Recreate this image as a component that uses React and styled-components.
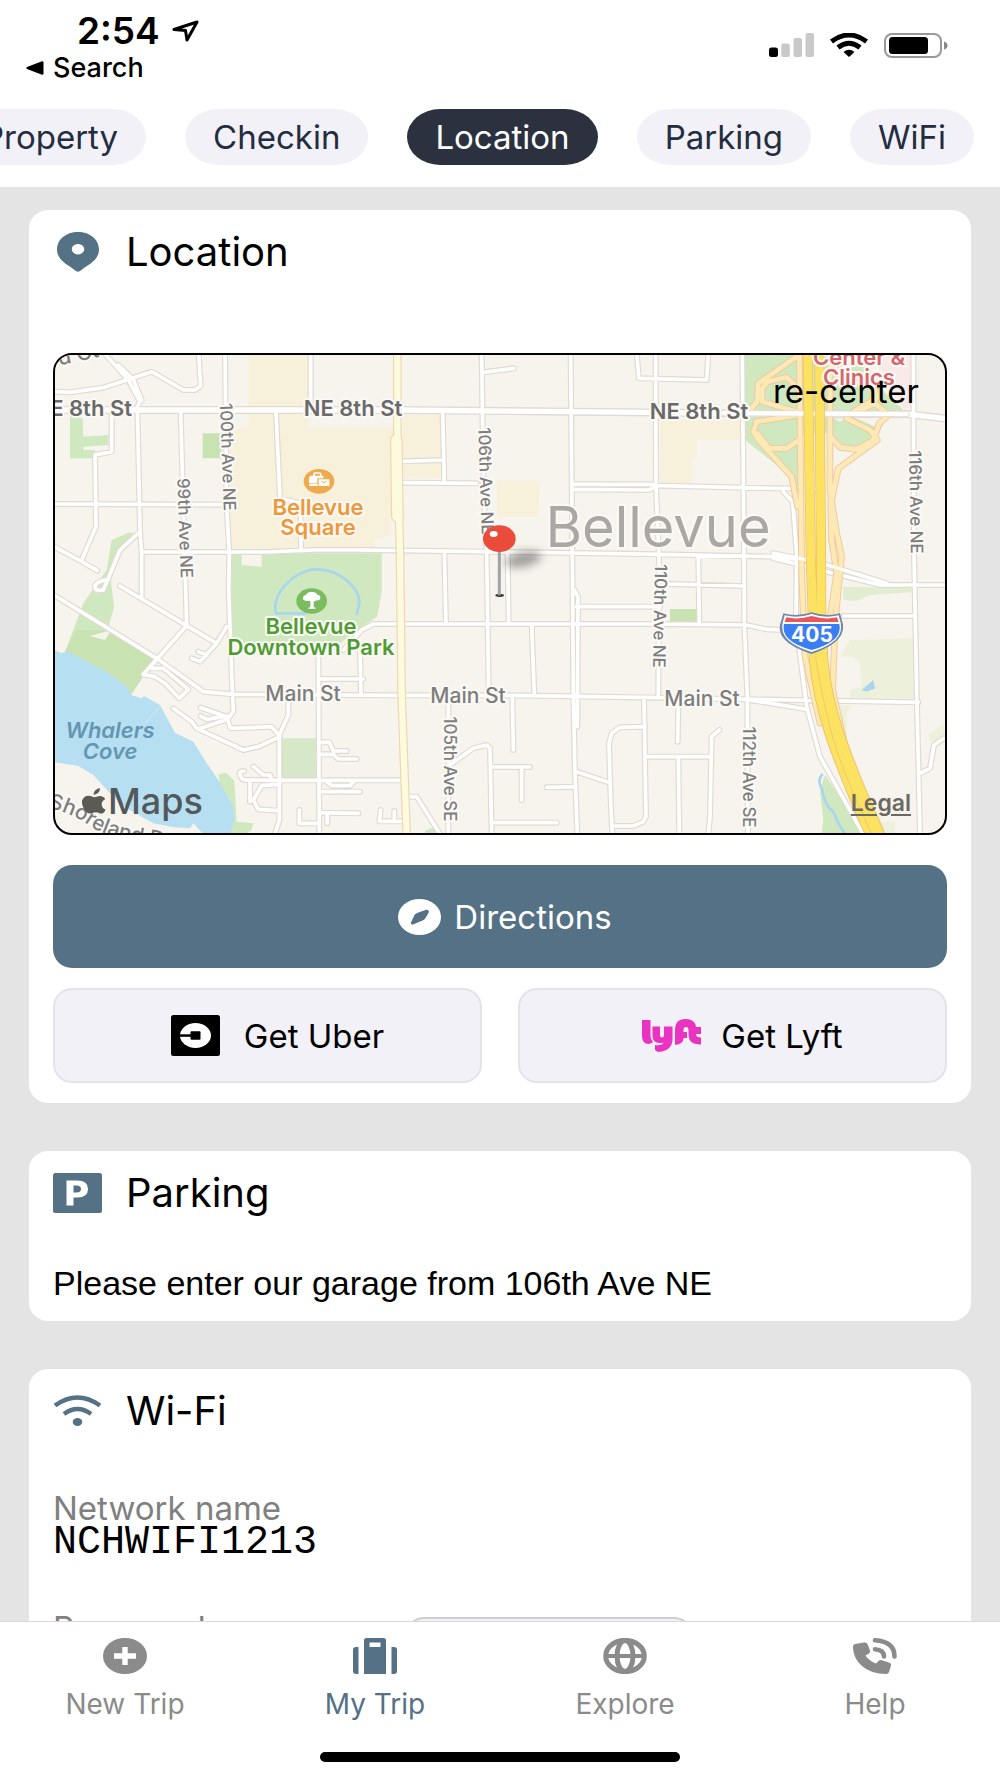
import React from "react";
import styled, { createGlobalStyle } from "styled-components";

const slate = "#547186";
const ink = "#232d3f";
const grey = "#8b8b8b";

const GlobalStyle = createGlobalStyle`
  * { box-sizing: border-box; }
  body {
    margin: 0;
    background: #e4e4e4;
    font-family: Inter, "Liberation Sans", sans-serif;
    color: #000;
  }
  button { font: inherit; color: inherit; border: 0; background: none; padding: 0; cursor: pointer; }
  h2, p, dl, dd, dt { margin: 0; font-weight: 400; }
  svg { display: block; flex: none; }
`;

const Screen = styled.div`
  display: flex;
  flex-direction: column;
  height: 100vh;
  overflow: hidden;
`;

const Header = styled.header`
  background: #fff;
  padding-bottom: 22px;
`;

const StatusBar = styled.div`
  display: flex;
  justify-content: space-between;
  padding: 11px 52px 0 26px;
  height: 109px;
`;

const Clock = styled.div`
  display: flex;
  align-items: center;
  gap: 12px;
  padding-left: 51px;
  font-size: 37px;
  font-weight: 600;
  line-height: 40px;
`;

const BackButton = styled.button`
  display: flex;
  align-items: center;
  gap: 9px;
  font-size: 27px;
  font-weight: 500;
  line-height: 34px;
`;

const Indicators = styled.div`
  display: flex;
  align-items: center;
  gap: 16px;
  height: 68px;
`;

const Pills = styled.nav`
  display: flex;
  justify-content: flex-end;
  gap: 39px;
  padding-right: 26px;
  overflow: hidden;
`;

const Pill = styled.button`
  flex: none;
  height: 56px;
  padding: 0 28px;
  border-radius: 33px / 28px;
  font-size: 33px;
  line-height: 56px;
  color: ${(p) => (p.$active ? "#fff" : ink)};
  background: ${(p) => (p.$active ? "#2b313f" : "#f2f1f7")};
`;

const Content = styled.main`
  flex: 1;
  min-height: 0;
  overflow-y: auto;
  scrollbar-width: none;
  display: flex;
  flex-direction: column;
  gap: 48px;
  padding: 23px 29px;
`;

const Card = styled.section`
  flex: none;
  background: #fff;
  border-radius: 20px / 18px;
  padding: 20px 24px;
`;

const CardHead = styled.div`
  display: flex;
  align-items: center;
  gap: 24px;
  height: 44px;
`;

const HeadIcon = styled.span`
  display: flex;
  justify-content: center;
  width: 49px;
`;

const Title = styled.h2`
  font-size: 40px;
  line-height: 44px;
`;

const MapFrame = styled.div`
  position: relative;
  height: 482px;
  margin-top: 79px;
  border: 2px solid #000;
  border-radius: 19px;
  overflow: hidden;
  background: #f7f4ee;
`;

const MapCanvas = styled.svg`
  width: 100%;
  height: 100%;
`;

const Recenter = styled.button`
  position: absolute;
  top: 16px;
  right: 26px;
  font-size: 33px;
  line-height: 40px;
`;

const Legal = styled.a`
  position: absolute;
  right: 34px;
  bottom: 17px;
  font-size: 23px;
  font-weight: 600;
  line-height: 26px;
  color: #6b6963;
  text-underline-offset: 3px;
`;

const Actions = styled.div`
  display: grid;
  grid-template-columns: 1fr 1fr;
  gap: 20px 36px;
  margin-top: 30px;
`;

const Action = styled.button`
  display: flex;
  align-items: center;
  justify-content: center;
  gap: ${(p) => p.$gap}px;
  height: ${(p) => (p.$primary ? 103 : 95)}px;
  padding-left: ${(p) => (p.$primary ? 10 : 20)}px;
  grid-column: ${(p) => (p.$primary ? "1 / -1" : "auto")};
  border-radius: 19px;
  border: ${(p) => (p.$primary ? "0" : "2px solid #e2e4ea")};
  background: ${(p) => (p.$primary ? slate : "#f2f1f7")};
  color: ${(p) => (p.$primary ? "#fff" : "#000")};
  font-size: 33px;
`;

const Note = styled.p`
  margin-top: 50px;
  font-family: "Liberation Sans", Arial, sans-serif;
  font-size: 34px;
  line-height: 36px;
`;

const Fields = styled.dl`
  margin-top: 57px;
  display: flex;
  flex-direction: column;
  gap: 50px;
`;

const Field = styled.div`
  display: grid;
  grid-template-columns: 352px 288px;
`;

const FieldName = styled.dt`
  font-size: 33px;
  line-height: 36px;
  color: #808080;
`;

const FieldValue = styled.dd`
  grid-column: 1;
  font-family: "Liberation Mono", "Courier New", monospace;
  font-size: 40px;
  line-height: 34px;
`;

const RevealButton = styled.button`
  grid-column: 2;
  grid-row: 1 / span 2;
  height: 60px;
  margin-top: 7px;
  border: 2px solid #cfced6;
  border-radius: 19px;
  background: #f2f1f7;
`;

const TabBar = styled.footer`
  flex: none;
  height: 157px;
  background: #fff;
  border-top: 1px solid #d9d9dc;
  display: flex;
  flex-direction: column;
  align-items: center;
  justify-content: space-between;
  padding: 16px 0;
`;

const Tabs = styled.nav`
  display: grid;
  grid-template-columns: repeat(4, 1fr);
  width: 100%;
`;

const Tab = styled.button`
  display: flex;
  flex-direction: column;
  align-items: center;
  gap: 13px;
  font-size: 28px;
  line-height: 34px;
  color: ${(p) => (p.$active ? slate : grey)};
`;

const HomeIndicator = styled.div`
  width: 36%;
  height: 10px;
  border-radius: 6px;
  background: #000;
`;

/* ---------- icons ---------- */

const ArrowIcon = () => (
  <svg width="27" height="22" viewBox="0 0 27 22" fill="none" stroke="#000" strokeWidth="3" strokeLinejoin="round">
    <path d="M25 2 L2 9.5 L13.5 10.5 L15 20 Z" />
  </svg>
);

const BackIcon = () => (
  <svg width="18" height="14" viewBox="0 0 18 14">
    <path d="M17.5 1v12q0 1-1.500 .8L1 8q-1.200-1 0-2L16 .2q1.500-.2 1.500 .8z" />
  </svg>
);

const SignalIcon = () => (
  <svg width="45" height="24" viewBox="0 0 45 24">
    <rect x="0" y="14.500" width="9" height="9.500" rx="2.500" />
    <g fill="#c9c9c9">
      <rect x="12.300" y="10.500" width="8.500" height="13.500" rx="2" />
      <rect x="24.500" y="5" width="8.500" height="19" rx="2" />
      <rect x="36.500" y="0" width="8.500" height="24" rx="2" />
    </g>
  </svg>
);

const StatusWifiIcon = () => (
  <svg width="38" height="24" viewBox="0 0 38 24">
    <g fill="none" stroke="#000" strokeWidth="5">
      <path d="M1.500 8.500 Q19-4.500 36.500 8.500" />
      <path d="M8 14.500 Q19 6 30 14.500" />
    </g>
    <path d="M13.500 19 Q19 14.500 24.500 19 L19 24 Z" />
  </svg>
);

const BatteryIcon = () => (
  <svg width="64" height="25" viewBox="0 0 64 25">
    <rect x="1" y="1" width="56" height="23" rx="7" fill="none" stroke="#999" strokeWidth="2" />
    <rect x="5" y="4" width="39" height="17" rx="3.500" />
    <path d="M60 8.500q3.500 1 3.500 4t-3.500 4z" fill="#888" />
  </svg>
);

const PlaceIcon = () => (
  <svg width="42" height="40" viewBox="0 0 42 40" fill={slate} fillRule="evenodd">
    <path d="M21 0C9 0 0 7.500 0 17.500C0 29 12 33 19 39q2 1.500 4 0C30 33 42 29 42 17.500C42 7.500 33 0 21 0zM21 12a6.200 5.200 0 1 0 .01 0z" />
  </svg>
);

const ParkingIcon = () => (
  <svg width="49" height="40" viewBox="0 0 49 40">
    <rect width="49" height="40" rx="2.500" fill={slate} />
    <path fill="#fff" fillRule="evenodd" d="M13.500 7.500H24.500Q35 7.500 35 16Q35 24.500 24.500 24.500H20.500V32.500H13.500ZM20.500 12.500V19.500H23.500Q28 19.500 28 16T23.500 12.500Z" />
  </svg>
);

const WifiIcon = () => (
  <svg width="49" height="32" viewBox="0 0 49 32">
    <g fill="none" stroke={slate} strokeWidth="4.500">
      <path d="M2 10.500 Q24.500-5.500 47 10.500" />
      <path d="M11 19 Q24.500 9 38 19" />
    </g>
    <ellipse cx="24.500" cy="27" rx="4.800" ry="4" fill={slate} />
  </svg>
);

const CompassIcon = () => (
  <svg width="43" height="36" viewBox="0 0 43 36">
    <ellipse cx="21.500" cy="18" rx="21.500" ry="18" fill="#fff" />
    <path fill={slate} d="M30 11Q31.500 12 30.500 14L27.500 19Q26.500 20.500 24.500 21.500L15 25.500Q12.500 25.500 13 23.500L16 17Q17 15 19 14L27.500 11Q29 10.500 30 11Z" />
  </svg>
);

const UberIcon = () => (
  <svg width="49" height="41" viewBox="0 0 49 41">
    <rect width="49" height="41" rx="2.500" />
    <ellipse cx="24.500" cy="20.500" rx="15.500" ry="12.500" fill="#fff" />
    <rect x="8" y="19.300" width="14" height="2.500" />
    <rect x="19.500" y="16.300" width="10" height="8.400" rx="1" />
  </svg>
);

const LyftIcon = () => (
  <svg width="59" height="34" viewBox="0 0 59 34" fill="#ea33c0">
    <path d="M0 1H8.500V17Q8.500 20 11 23 9 25 6 25 0 24 0 17Z" />
    <path d="M10.500 7.500H18V16Q18 18.500 20 18.500T22 16V7.500H30.500V20Q30.500 32 16 33L13 31V26Q20 27 21.500 23.500 10.500 26 10.500 16Z" />
    <path d="M33 26V11Q33 0 43.500 0 53 0 54 8H59V15H54V16Q55 18.500 59 18.500V25.500Q46.500 26 46.500 15V11Q46.500 8 44 8T41.500 11V13H45V19H41.500Q41.500 25 33 26Z" />
  </svg>
);

const AddIcon = () => (
  <svg width="44" height="36" viewBox="0 0 44 36">
    <ellipse cx="22" cy="18" rx="22" ry="18" fill="currentColor" />
    <path d="M22 9V27M11 18H33" stroke="#fff" strokeWidth="5.500" />
  </svg>
);

const SuitcaseIcon = () => (
  <svg width="44" height="36" viewBox="0 0 44 36" fill="currentColor" fillRule="evenodd">
    <path d="M13.500 0H30.500Q33 0 33 2.500V36H11V2.500Q11 0 13.500 0ZM16.500 4.500V9H27.500V4.500Z" />
    <path d="M5.500 9V36H3Q0 36 0 33V12Q0 9 3 9ZM38.500 9H41Q44 9 44 12V33Q44 36 41 36H38.500Z" />
  </svg>
);

const GlobeIcon = () => (
  <svg width="44" height="36" viewBox="0 0 44 36" fill="none" stroke="currentColor">
    <ellipse cx="22" cy="18" rx="19.300" ry="15.600" strokeWidth="5" />
    <ellipse cx="22" cy="18" rx="8" ry="15.500" strokeWidth="5" />
    <path d="M2 18H42" strokeWidth="4.200" />
  </svg>
);

const CallIcon = () => (
  <svg width="44" height="36" viewBox="0 0 44 36">
    <path fill="currentColor" d="M2 6L11 4.500Q13.500 4 14.500 6L17 12.500Q17.500 14.500 16 15.500L12.500 17.500Q16 23 23 25.500L25.500 23Q27 21.500 29.500 22.500L36.500 24.800Q38.500 25.500 38 27.500L36 34Q35.500 36 33 36C14 36 0 24.500 0 8.500Q0 6.500 2 6Z" />
    <g fill="none" stroke="currentColor" strokeWidth="4.600" strokeLinecap="round">
      <path d="M22 2.300Q41.500 3.500 41.500 18.500" />
      <path d="M22 11.300Q31 12 31 18.500" />
    </g>
  </svg>
);

/* ---------- map ---------- */

const roads = [
  "M42 155 90 157 190 143 335 95 430 150 465 150 482 138 476 42",
  "M195 42 265 120 300 185 292 200 300 570 305 640 305 770",
  "M235 75 280 118 305 180",
  "M422 215 428 440 438 780 440 857",
  "M555 42 560 500 568 640 566 750 575 1000 580 1115 562 1138",
  "M812 42V210",
  "M708 215 720 475 782 490 783 630",
  "M42 492 560 494",
  "M305 636H680L820 630H960L1340 635 1860 643 2200 650 2290 660",
  "M215 225V335L165 345 168 560 125 660",
  "M42 620 120 662 172 692",
  "M300 575 240 630 205 715 190 750Q165 755 165 740T205 718",
  "M240 738 440 857 530 910 560 860",
  "M530 910 480 965 455 955M475 935 500 945",
  "M42 765 350 955 470 1040 490 1055 580 1063 1060 1066 1400 1066 1860 1073 2635 1087",
  "M440 857 310 1003 345 1010 375 1030 418 1075 445 1048 370 985H335",
  "M400 1105 455 1145 470 1165 610 1230 655 1220 720 1190 695 1160 572 1165 562 1138 475 1167",
  "M482 1103 560 1130M482 1128 500 1138 560 1128",
  "M745 1070V1125L718 1185V1440L705 1482",
  "M612 1293Q595 1293 600 1305T612 1320L720 1321H1090",
  "M640 1280 670 1305H690L695 1320M630 1320V1385M715 1333 665 1337 640 1380 655 1408 715 1412",
  "M835 930 838 1482M835 1017H970M960 930 963 1065",
  "M835 1207H868L880 1233H920M835 1243H880L895 1257H950M860 1325 875 1337H930L945 1321",
  "M840 1355H960M840 1418 955 1420M862 1420V1450M778 1410V1450H838",
  "M910 930 965 870 1000 852H1860L2120 855 2180 868 2240 870",
  "M1213 635 1218 850M1325 42 1330 420 1340 635 1346 1060M1403 640 1406 850",
  "M1090 428 1310 430M1208 215 1213 425M1090 364 1208 360M1330 97 1422 85",
  "M1592 42 1597 640 1600 1060 1605 1300 1612 1482M1603 750 1614 770 1612 1160",
  "M1475 852 1483 1065M1417 1070 1420 1230M1610 800H1860",
  "M1230 1275 1300 1225 1340 1215 1350 1225 1355 1482M1355 1281H1470M1445 1281V1380M1355 1448H1550",
  "M1520 1342 1605 1340M1610 1295 1705 1327",
  "M1815 1160 1740 1162 1715 1180 1707 1210 1712 1380 1717 1482M1717 1458H1780L1810 1445 1818 1430 1812 1075",
  "M1820 1250H2010M1225 1090V1482",
  "M1100 1370H1130L1200 1482M1090 1444H1018L1022 1410M1063 1413V1444",
  "M1847 42 1848 440 1857 650 1855 1070M1790 42 1797 115 2000 120 2005 42",
  "M1597 433H1830L1860 437 2210 445H2330M1597 448 1825 450 1850 440",
  "M2107 42 2112 640 2113 850 2122 1070 2124 1482",
  "M1975 650 1978 850M1890 732 2110 738",
  "M1915 1090 1913 1205M1915 1250 1918 1482M2038 1170 2015 1190 2010 1430 2005 1482",
  "M2230 455 2258 485 2270 640 2268 850 2300 1100 2340 1250 2470 1482",
  "M2200 655 2520 735H2712M2200 640 2330 665 2540 730",
  "M2620 42 2622 640 2630 1050 2640 1482M2640 1300 2670 1285 2682 1215 2712 1195",
  "M2410 828H2625M2130 1080 2300 1108",
].join("");

const avenue = "M42 210H1060L1590 215 2300 222H2600L2712 235";
const bellevueWay = "M1072 42V300L1080 640 1085 1070 1100 1482";
const ramps = [
  "M2278 42 2285 700 2295 950 2340 1150",
  "M2370 42V450L2390 580 2405 650 2385 850 2378 1050 2420 1240",
  "M2372 480 2375 600 2390 700 2360 900",
  "M2270 50 2155 130 2152 185 2130 210",
  "M2275 145 2240 112 2182 125 2165 150 2167 185 2275 217",
  "M2275 225 2150 245 2140 275 2160 305 2255 410 2272 500",
  "M2152 280 2187 325H2240L2277 300",
  "M2420 235 2490 270 2512 300 2395 385 2375 480",
  "M2372 290 2400 322 2450 328 2500 300 2518 250 2545 225 2505 190 2440 220",
  "M2370 80 2440 110 2500 125 2510 175 2440 215",
].join("");
const freeway = "M2303 42 2312 640 2320 880M2338 42 2343 640 2344 880";
const freewaySouth = "M2332 880 2336 960Q2345 1060 2380 1170T2505 1482";

const uprightLabels = [
  { x: 188, y: 117, a: 88, t: "100th Ave NE" },
  { x: 145, y: 188, a: 88, t: "99th Ave NE" },
  { x: 446, y: 141, a: 88, t: "106th Ave NE" },
  { x: 620, y: 276, a: 91, t: "110th Ave NE" },
  { x: 876, y: 162, a: 89, t: "116th Ave NE" },
  { x: 410, y: 429, a: 90, t: "105th Ave SE" },
  { x: 709, y: 437, a: 90, t: "112th Ave SE" },
];

const streetLabels = [
  { x: 92, y: 76, t: "NE 8th St", bold: true, anchor: "end" },
  { x: 313, y: 76, t: "NE 8th St", bold: true },
  { x: 659, y: 79, t: "NE 8th St", bold: true },
  { x: 263, y: 361, t: "Main St" },
  { x: 428, y: 363, t: "Main St" },
  { x: 662, y: 366, t: "Main St" },
];

const MapLabel = styled.text`
  font-size: ${(p) => p.$size || 21}px;
  font-weight: ${(p) => p.$weight || 500};
  font-style: ${(p) => (p.$italic ? "italic" : "normal")};
  fill: ${(p) => p.$color || "#7d7d7d"};
  stroke: ${(p) => p.$halo || "#fbf9f5"};
  stroke-width: 4px;
  stroke-linejoin: round;
  paint-order: stroke;
  text-anchor: ${(p) => p.$anchor || "middle"};
`;

const CityMap = () => (
  <MapCanvas viewBox="15 15 890 478" preserveAspectRatio="xMidYMid slice" role="img" aria-label="Map of Bellevue">
    <defs>
      <filter id="soft" x="-50%" y="-100%" width="200%" height="300%">
        <feGaussianBlur stdDeviation="14" />
      </filter>
      <path id="shoreland" d="M8 468Q30 472 50 486T135 508" />
    </defs>
    <g transform="scale(0.33333)" fill="none">
      <g fill="#f7f0da">
        <path d="M625 42H805V265H1060L1050 590 1005 595V625H570V265H625Z" />
        <path d="M1088 225H1203V415H1088ZM1370 422H1500L1495 530H1370Z" />
        <path d="M1860 240H2100V300H1970V355H1955V430H1860Z" />
      </g>
      <g fill="#cfe8bf">
        <path d="M575 640H1025V755L1012 830 965 860 900 910H575Z" />
        <path d="M2115 42H2480L2500 125 2590 210 2545 225 2510 290Q2480 330 2420 325L2370 280H2280V470L2240 400 2115 300Z" />
        <path d="M90 225 128 235 130 290 205 285V315L130 320V330H165L160 355H90Z" />
        <path d="M75 935 130 790 200 690 215 600 265 578 300 580 240 630 210 700 222 800 195 900 150 890 215 870 345 955 275 1062 200 1010Z" />
        <path d="M535 1303 558 1298 583 1322 590 1445 640 1450 635 1470 615 1482H560Z" />
        <path d="M2355 1305 2440 1430 2460 1482H2345L2350 1440 2340 1350Z" />
        <path d="M1155 1472 1185 1460 1200 1482H1155Z" />
      </g>
      <path fill="#c8e3b1" d="M488 280H545V355H488ZM1890 807H1970V845H1890ZM110 870 215 870 345 955 275 1062 200 1010 75 935Z" />
      <path fill="#d7e8c8" d="M725 1195H830V1315H725Z" />
      <path fill="#f7f4ee" d="M605 640H665V680L605 675ZM150 888 215 870 195 900Z" />
      <path fill="#f7f4ee" d="M2385 45H2480L2430 85ZM2380 235H2420L2400 245ZM2440 232 2530 232 2510 262Z" />
      <path fill="#e0edd0" d="M2410 740 2615 745V757L2490 765 2450 783 2410 780Z" />
      <path fill="#edf0db" d="M2400 950 2430 900 2620 895 2625 1075H2430V1050L2465 1040 2460 970 2440 950ZM2380 1095H2435L2420 1120 2420 1240 2500 1400 2525 1445H2565V1482H2500L2400 1250ZM2665 1185 2712 1150V1200L2670 1205Z" />
      <path fill="#f8eae7" d="M2490 42H2612V205H2590L2550 130Z" />
      <path fill="#b7dff2" d="M42 930 65 940 80 933 200 995 260 1040 275 1065 305 1075 312 1068 360 1095 395 1160 405 1178 460 1205 500 1270 535 1320 580 1400 583 1440 570 1482H490L460 1450 450 1465 400 1462 340 1450 260 1405 210 1360 160 1305 115 1278 42 1266Z" />
      <path fill="#a9d5ef" d="M2465 1050 2500 1020 2505 1045 2480 1055Z" />
      <path stroke="#a9d5ef" strokeWidth="8" d="M800 820H708C690 760 770 686 830 688C900 688 960 745 958 790L950 825M2348 1302Q2330 1320 2345 1345 2355 1400 2380 1415L2395 1450 2415 1482" />
      <path stroke="#dcebef" strokeWidth="3" d="M305 1162 360 1100" />

      <g strokeLinejoin="round" strokeLinecap="round">
        <path d={roads} stroke="#e0dad1" strokeWidth="18" />
        <path d={avenue} stroke="#e0dad1" strokeWidth="24" />
        <path d={roads} stroke="#fff" strokeWidth="11" />
        <path d={avenue} stroke="#fff" strokeWidth="16" />
        <path d={bellevueWay} stroke="#f0d5b0" strokeWidth="26" />
        <path d="M1069 300 1072 530" stroke="#f0d5b0" strokeWidth="38" />
        <path d="M1069 300 1072 530" stroke="#fdfbdd" strokeWidth="31" />
        <path d={bellevueWay} stroke="#fdfbdd" strokeWidth="19" />
        <path d={ramps} stroke="#f1c9a0" strokeWidth="20" />
        <path d={ramps} stroke="#fde9b6" strokeWidth="14" />
        <path d="M2050 219 2600 222" stroke="#e0dad1" strokeWidth="18" />
        <path d="M2050 219 2600 222" stroke="#fff" strokeWidth="13" />
        <path d="M2200 640 2330 665 2540 730" stroke="#fff" strokeWidth="9" />
        <path d={freewaySouth} stroke="#f0b96f" strokeWidth="58" />
        <path d={freewaySouth} stroke="#fbe361" strokeWidth="53" />
        <path d={freeway} stroke="#f0b96f" strokeWidth="30" />
        <path d={freeway} stroke="#fbe361" strokeWidth="26" />
        <path d="M2326 880 2328 960Q2345 1070 2375 1180T2495 1482" stroke="#f2c66b" strokeWidth="3" />
      </g>

      <ellipse cx="837" cy="424" rx="46" ry="37" fill="#f0aa4e" />
      <path stroke="#fff" strokeWidth="5" d="M822 408V402Q822 399 826 399H838Q842 399 842 402V408M809 434H833" />
      <path fill="#fff" d="M812 407H850V415H832V430H807V412ZM836 418H868V438H836ZM807 434H832V438H807Z" />
      <path stroke="#f0aa4e" strokeWidth="3" d="M844 422Q852 434 860 422" />
      <ellipse cx="815" cy="783" rx="46" ry="38" fill="#7cbb5f" />
      <path fill="#fff" d="M811 783H800Q786 782 789 772 790 766 798 765 802 755 815 756 828 755 832 764 842 765 841 774 841 782 831 781L821 785V799L828 806H803L811 800Z" />
    </g>

    {streetLabels.map((l) => (
      <MapLabel
        key={l.x}
        x={l.x}
        y={l.y}
        $anchor={l.anchor}
        $size={l.bold ? 22 : 21}
        $weight={l.bold ? 600 : 500}
        $color={l.bold ? "#6a6a6a" : undefined}
      >
        {l.t}
      </MapLabel>
    ))}
    {uprightLabels.map((l) => (
      <MapLabel key={l.t} $size={17} dominantBaseline="central" transform={`translate(${l.x} ${l.y}) rotate(${l.a})`}>{l.t}</MapLabel>
    ))}
    <MapLabel $anchor="start" transform="translate(12 27) rotate(-12)">rd Ct</MapLabel>
    <MapLabel $anchor="start"><textPath href="#shoreland">Shoreland Dr</textPath></MapLabel>

    <MapLabel x="278" y="175" $size={22} $weight={600} $color="#ed983a">Bellevue</MapLabel>
    <MapLabel x="278" y="195" $size={22} $weight={600} $color="#ed983a">Square</MapLabel>
    <MapLabel x="271" y="294" $size={22} $weight={600} $color="#4f9c33">Bellevue</MapLabel>
    <MapLabel x="271" y="315" $size={22} $weight={600} $color="#4f9c33">Downtown Park</MapLabel>
    <MapLabel x="70" y="398" $size={22} $weight={600} $italic $color="#6495b1" $halo="#b7dff2">Whalers</MapLabel>
    <MapLabel x="70" y="419" $size={22} $weight={600} $italic $color="#6495b1" $halo="#b7dff2">Cove</MapLabel>
    <MapLabel x="819" y="25" $size={22} $weight={600} $color="#d5666b">Center &amp;</MapLabel>
    <MapLabel x="819" y="45" $size={22} $weight={600} $color="#d5666b">Clinics</MapLabel>
    <MapLabel x="618" y="207" $size={56} $weight={400} $color="#a9a8a4">Bellevue</MapLabel>

    <g transform="scale(0.33333)">
      <path fill="#7088ad" d="M2230 820Q2270 832 2315 817 2360 832 2400 820L2405 838Q2430 905 2315 942 2195 905 2225 838Z" />
      <path fill="#fff" d="M2234 826Q2275 836 2315 822 2355 836 2396 826L2402 848Q2415 905 2315 936 2215 905 2228 848Z" />
      <path fill="#e9575b" d="M2239 832Q2275 840 2315 828 2355 840 2391 832L2396 846H2234Z" />
      <path fill="#3b7df2" d="M2232 852H2398Q2410 904 2315 930 2220 904 2232 852Z" />

      <ellipse cx="1450" cy="658" rx="55" ry="22" fill="#000" opacity=".36" filter="url(#soft)" transform="rotate(-12 1450 658)" />
      <ellipse cx="1379" cy="766" rx="13" ry="5" fill="#333" />
      <path stroke="#9fa2a6" strokeWidth="9" d="M1378 632V766" />
      <ellipse cx="1378" cy="596" rx="49" ry="40" fill="#ea4b3a" />
      <ellipse cx="1361" cy="582" rx="12" ry="9" fill="#fff" />

      <g fill="#5b5a55">
        <path d="M162 1372Q170 1371 178 1368 190 1368 196 1377 184 1384 185 1394 187 1406 197 1409 190 1424 178 1420 168 1414 158 1419 148 1424 138 1415 124 1398 126 1382 133 1364 152 1368Z" />
        <path d="M160 1365Q161 1348 180 1344 180 1361 160 1365Z" />
      </g>
    </g>
    <MapLabel x="772" y="302" $weight={700} $color="#fff" $halo="none">405</MapLabel>
    <MapLabel x="68" y="474" $size={36} $weight={500} $color="#53585a" $halo="none" $anchor="start">Maps</MapLabel>
  </MapCanvas>
);

/* ---------- screen ---------- */

const sections = ["Property", "Checkin", "Location", "Parking", "WiFi"];

const tabs = [
  { label: "New Trip", Icon: AddIcon },
  { label: "My Trip", Icon: SuitcaseIcon },
  { label: "Explore", Icon: GlobeIcon },
  { label: "Help", Icon: CallIcon },
];

function CardHeading({ icon, children }) {
  return (
    <CardHead>
      <HeadIcon>{icon}</HeadIcon>
      <Title>{children}</Title>
    </CardHead>
  );
}

export default function App() {
  return (
    <Screen>
      <GlobalStyle />
      <Header>
        <StatusBar>
          <div>
            <Clock>2:54 <ArrowIcon /></Clock>
            <BackButton><BackIcon />Search</BackButton>
          </div>
          <Indicators>
            <SignalIcon />
            <StatusWifiIcon />
            <BatteryIcon />
          </Indicators>
        </StatusBar>
        <Pills>
          {sections.map((s) => (
            <Pill key={s} $active={s === "Location"}>{s}</Pill>
          ))}
        </Pills>
      </Header>

      <Content>
        <Card>
          <CardHeading icon={<PlaceIcon />}>Location</CardHeading>
          <MapFrame>
            <CityMap />
            <Recenter>re-center</Recenter>
            <Legal href="#legal">Legal</Legal>
          </MapFrame>
          <Actions>
            <Action $primary $gap={13}><CompassIcon />Directions</Action>
            <Action $gap={24}><UberIcon />Get Uber</Action>
            <Action $gap={20}><LyftIcon />Get Lyft</Action>
          </Actions>
        </Card>

        <Card>
          <CardHeading icon={<ParkingIcon />}>Parking</CardHeading>
          <Note>Please enter our garage from 106th Ave NE</Note>
        </Card>

        <Card>
          <CardHeading icon={<WifiIcon />}>Wi-Fi</CardHeading>
          <Fields>
            <Field>
              <FieldName>Network name</FieldName>
              <FieldValue>NCHWIFI1213</FieldValue>
            </Field>
            <Field>
              <FieldName>Password</FieldName>
              <RevealButton aria-label="Show password" />
            </Field>
          </Fields>
        </Card>
      </Content>

      <TabBar>
        <Tabs>
          {tabs.map(({ label, Icon }) => (
            <Tab key={label} $active={label === "My Trip"}><Icon />{label}</Tab>
          ))}
        </Tabs>
        <HomeIndicator />
      </TabBar>
    </Screen>
  );
}
